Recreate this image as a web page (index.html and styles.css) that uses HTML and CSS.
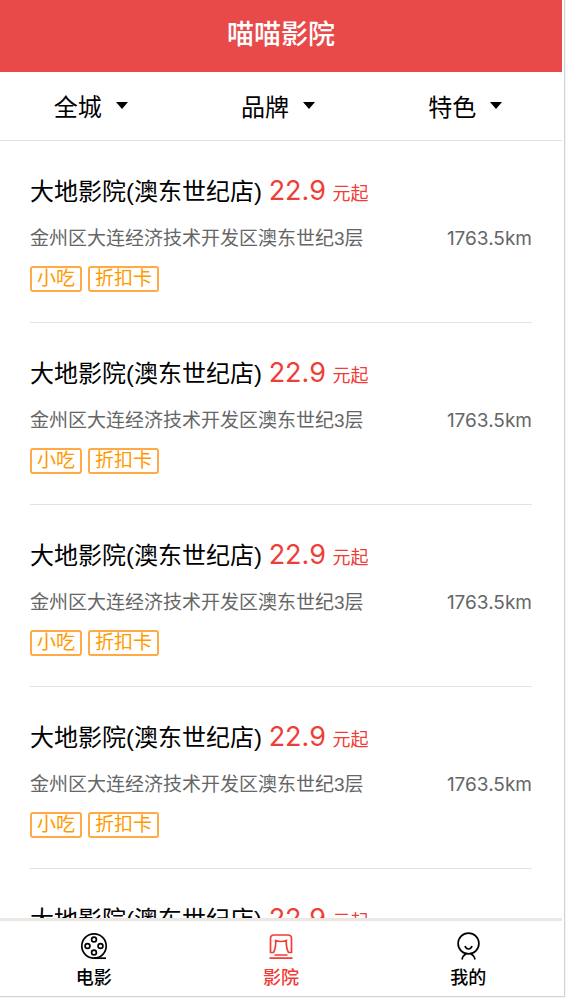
FILE: index.html
```html
<!DOCTYPE html>
<html lang="zh-CN">
<head>
<meta charset="utf-8">
<meta name="viewport" content="width=device-width, initial-scale=1">
<title>喵喵影院</title>
<link rel="stylesheet" href="styles.css">
</head>
<body>
<div class="app">
  <header class="header"><h1 class="header-title">喵喵影院</h1></header>
  <div class="filters">
    <button class="filter" type="button">全城<span class="caret"></span></button>
    <button class="filter" type="button">品牌<span class="caret"></span></button>
    <button class="filter" type="button">特色<span class="caret"></span></button>
  </div>
  <main class="content">
    <ul class="cinemas">
      <li class="cinema">
        <h2 class="name">大地影院(澳东世纪店) <span class="price">22.9</span> <span class="unit">元起</span></h2>
        <p class="address"><span>金州区大连经济技术开发区澳东世纪3层</span><span class="distance">1763.5km</span></p>
        <div class="tags"><span class="tag">小吃</span><span class="tag">折扣卡</span></div>
      </li>
      <li class="cinema">
        <h2 class="name">大地影院(澳东世纪店) <span class="price">22.9</span> <span class="unit">元起</span></h2>
        <p class="address"><span>金州区大连经济技术开发区澳东世纪3层</span><span class="distance">1763.5km</span></p>
        <div class="tags"><span class="tag">小吃</span><span class="tag">折扣卡</span></div>
      </li>
      <li class="cinema">
        <h2 class="name">大地影院(澳东世纪店) <span class="price">22.9</span> <span class="unit">元起</span></h2>
        <p class="address"><span>金州区大连经济技术开发区澳东世纪3层</span><span class="distance">1763.5km</span></p>
        <div class="tags"><span class="tag">小吃</span><span class="tag">折扣卡</span></div>
      </li>
      <li class="cinema">
        <h2 class="name">大地影院(澳东世纪店) <span class="price">22.9</span> <span class="unit">元起</span></h2>
        <p class="address"><span>金州区大连经济技术开发区澳东世纪3层</span><span class="distance">1763.5km</span></p>
        <div class="tags"><span class="tag">小吃</span><span class="tag">折扣卡</span></div>
      </li>
      <li class="cinema">
        <h2 class="name">大地影院(澳东世纪店) <span class="price">22.9</span> <span class="unit">元起</span></h2>
        <p class="address"><span>金州区大连经济技术开发区澳东世纪3层</span><span class="distance">1763.5km</span></p>
        <div class="tags"><span class="tag">小吃</span><span class="tag">折扣卡</span></div>
      </li>
    </ul>
  </main>
  <nav class="tabbar">
    <a class="tab" href="#movie">
      <svg class="icon" viewBox="0 0 30 30" aria-hidden="true">
        <circle cx="15" cy="15" r="12.2"/><circle cx="15" cy="8.5" r="2.4"/><circle cx="8.500" cy="15" r="2.4"/><circle cx="21.5" cy="15" r="2.4"/><circle cx="15" cy="21.5" r="2.4"/><path d="M15 27.2H27"/>
      </svg>
      <span>电影</span>
    </a>
    <a class="tab active" href="#cinema" aria-current="page">
      <svg class="icon" viewBox="0 0 30 30" aria-hidden="true">
        <path d="M4.500 21.500V7.500Q4.500 4 8 4H22Q25.500 4 25.500 7.500V21.500H22.500Q20 17 20.300 9.500Q15 11.500 9.700 9.500Q10 17 7.500 21.500Z"/><path d="M8.500 24H21.500M3.500 27.200H26.500"/>
      </svg>
      <span>影院</span>
    </a>
    <a class="tab" href="#mine">
      <svg class="icon" viewBox="0 0 30 30" aria-hidden="true">
        <circle cx="15.500" cy="12.500" r="10.400"/><path d="M12 15Q13 18 15.500 18T19 15M9 28.500Q9.800 24.500 13.500 22.500M22 28.500Q21.200 24.500 17.500 22.500"/>
      </svg>
      <span>我的</span>
    </a>
  </nav>
</div>
</body>
</html>
```

FILE: styles.css
```css
* {
  box-sizing: border-box;
  margin: 0;
  padding: 0;
}

body {
  height: 100vh;
  padding: 0 1px 1px 0;
  background: #f5f5f5;
  color: #000;
  font-family: "Liberation Sans", "Noto Sans CJK SC", sans-serif;
}

.app {
  display: flex;
  flex-direction: column;
  height: 100%;
  padding-right: 2px;
  border: solid #d2d2d2;
  border-width: 0 1px 1px 0;
  background: #fff;
}

.header {
  flex: none;
  height: 72px;
  background: #e84a4a;
  color: #fff;
  text-align: center;
}

.header-title {
  font-size: 27px;
  font-weight: 500;
  line-height: 70px;
}

.filters {
  display: flex;
  flex: none;
  height: 69px;
  border-bottom: 1px solid #e3e3e3;
}

.filter {
  display: flex;
  flex: 1;
  align-items: center;
  justify-content: center;
  gap: 14px;
  padding: 0 6px 2px 0;
  border: 0;
  background: none;
  color: inherit;
  font: inherit;
  font-size: 24px;
}

.caret {
  border: solid transparent;
  border-width: 7px 6px 0;
  border-top-color: #000;
}

.content {
  flex: 1;
  min-height: 0;
  overflow: hidden;
}

.cinemas {
  padding: 0 30px;
  list-style: none;
}

.cinema {
  height: 182px;
  padding-top: 32px;
  border-bottom: 1px solid #e3e3e3;
}

.name {
  height: 36px;
  font-size: 24px;
  font-weight: 400;
  line-height: 36px;
  white-space: nowrap;
}

.price {
  color: #f03d37;
  font-family: Inter, sans-serif;
  font-size: 27px;
}

.unit {
  color: #f03d37;
  font-size: 18px;
}

.address {
  display: flex;
  justify-content: space-between;
  margin-top: 14px;
  color: #666;
  font-size: 19px;
  line-height: 32px;
  white-space: nowrap;
}

.distance {
  font-family: Inter, sans-serif;
}

.tags {
  display: flex;
  gap: 6px;
  margin-top: 11px;
}

.tag {
  padding: 0 5px;
  border: 2px solid #ffa947;
  border-radius: 3px;
  color: #f90;
  font-size: 19px;
  line-height: 22px;
}

.tabbar {
  display: flex;
  flex: none;
  height: 78px;
  border-top: 3px solid #ebe8e3;
}

.tab {
  display: flex;
  flex: 1;
  flex-direction: column;
  align-items: center;
  gap: 4px;
  padding-top: 10px;
  color: #000;
  font-size: 18px;
  font-weight: 500;
  line-height: 26px;
  text-decoration: none;
}

.active {
  color: #f03d37;
}

.icon {
  width: 30px;
  height: 30px;
  fill: none;
  stroke: currentColor;
  stroke-width: 1.7;
}
```
